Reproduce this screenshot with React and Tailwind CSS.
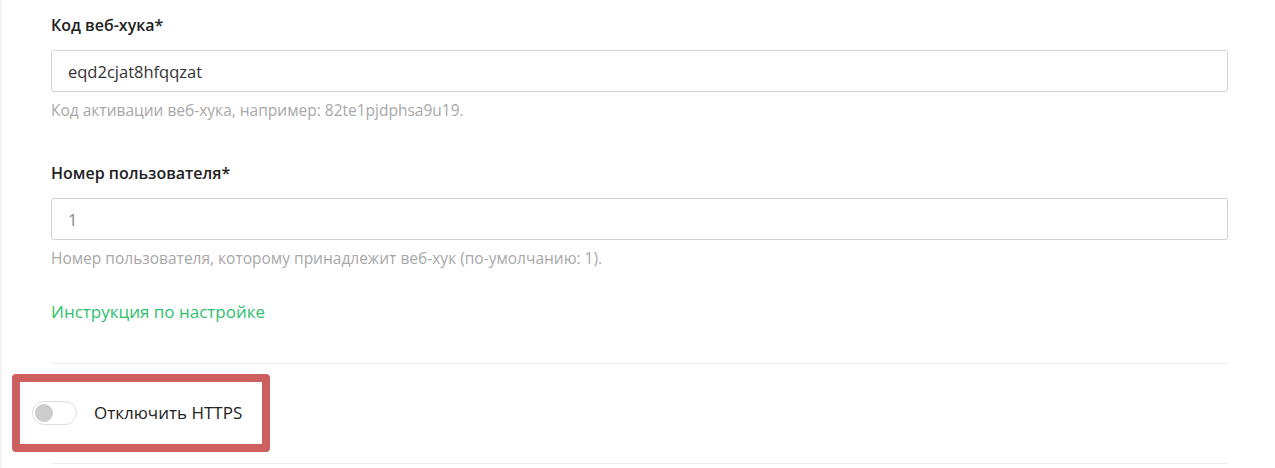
import React, { useState } from "react";

// Settings form for a webhook
const Field = (props) => {
  return (
    <div className={props.className}>
      <div className="text-[16px] leading-6 font-semibold text-[#222]">
        {props.label}
      </div>
      <input
        type="text"
        defaultValue={props.value}
        className={
          "mt-[13px] block w-full h-[42px] border border-[#d2d2d2] rounded-[3px] px-4 text-[16.5px] outline-none " +
          props.valueClass
        }
      />
      <div className="mt-2 text-[15.5px] leading-5 text-[#a8a8a8]">
        {props.hint}
      </div>
    </div>
  );
};

export default function App() {
  const [httpsOff, setHttpsOff] = useState(false);

  return (
    <div
      className="min-h-[468px] bg-white border-l-2 border-[#f2f2f2] overflow-hidden"
      style={{ fontFamily: "'Open Sans', 'Noto Sans', sans-serif" }}
    >
      <div className="pl-[49px] pr-[47px] pt-[13px]">
        <Field
          label="Код веб-хука*"
          value="eqd2cjat8hfqqzat"
          valueClass="text-[#333]"
          hint="Код активации веб-хука, например: 82te1pjdphsa9u19."
        />
        <Field
          className="mt-[41px]"
          label="Номер пользователя*"
          value="1"
          valueClass="text-[#8a8a8a]"
          hint="Номер пользователя, которому принадлежит веб-хук (по-умолчанию: 1)."
        />
        <a
          href="#"
          className="block mt-8 text-[17px] leading-6 text-[#2dbf6c]"
        >
          Инструкция по настройке
        </a>
        <div className="mt-[39px] border-t border-[#ececec]"></div>
      </div>

      <div className="pt-[10px] pb-[11px] pl-[10px]">
        <div className="w-[258px] h-[78px] border-8 border-[#cd5f5f] rounded-[4px] flex items-center pl-3">
          <button
            type="button"
            onClick={() => setHttpsOff(!httpsOff)}
            className={
              "relative w-[45px] h-[24px] rounded-full border border-[#dedede] " +
              (httpsOff ? "bg-[#2dbf6c]" : "bg-white")
            }
          >
            <span
              className={
                "absolute top-[2px] w-[18px] h-[18px] rounded-full " +
                (httpsOff ? "left-[23px] bg-white" : "left-[2px] bg-[#cccccc]")
              }
            ></span>
          </button>
          <span className="ml-[17px] text-[17px] text-[#222]">
            Отключить HTTPS
          </span>
        </div>
      </div>

      <div className="pl-[49px] pr-[47px]">
        <div className="border-t border-[#ececec]"></div>
      </div>
    </div>
  );
}
